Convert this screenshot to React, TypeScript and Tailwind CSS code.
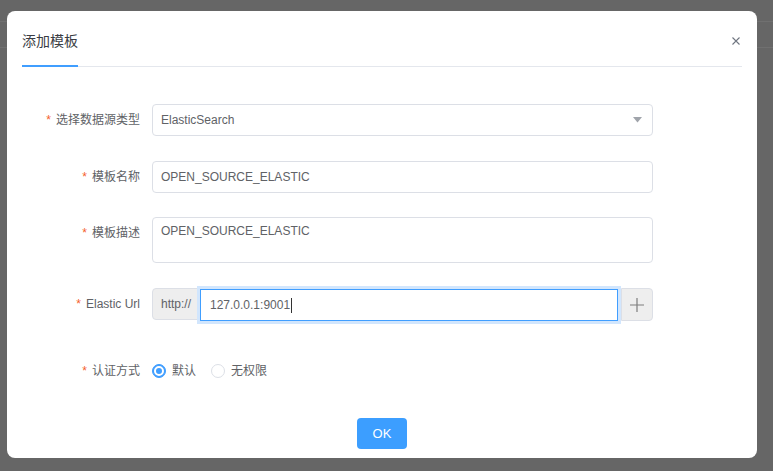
import React from "react";

const font = "font-['Liberation_Sans','Noto_Sans_CJK_SC',sans-serif]";

function Label({ text }: { text: string }) {
  return (
    <div className="w-[130px] shrink-0 pr-3 flex justify-end items-center h-8 text-[12px] text-[#606266]">
      <span className="text-[#f5612d] mr-[5px] text-[12px]">*</span>
      <span>{text}</span>
    </div>
  );
}

export default function App() {
  return (
    <div className={`w-[773px] h-[471px] bg-[#666666] relative overflow-hidden ${font}`}>
      <div className="h-[22px] border-b border-[#707070]" />
      <div className="h-[26px] border-b border-[#707070]" />

      <div className="absolute left-[7px] top-[11px] w-[750px] h-[447px] bg-white rounded-[8px] px-[15px] flex flex-col">
        {/* header */}
        <div className="relative border-b border-[#e4e7ed] pt-[20px] flex">
          <div className="border-b-2 border-[#409eff] mb-[-1px] pb-[14px] text-[14px] leading-[20px] text-[#3a3d44]">
            添加模板
          </div>
          <svg
            className="absolute right-[2px] top-[26px]"
            width="8"
            height="8"
            viewBox="0 0 8 8"
          >
            <path d="M0.5 0.5 L7.5 7.5 M7.5 0.5 L0.5 7.5" stroke="#6f7580" strokeWidth="1.1" />
          </svg>
        </div>

        {/* form */}
        <div className="flex flex-col pt-[37px]">
          <div className="flex">
            <Label text="选择数据源类型" />
            <div className="w-[501px] h-8 border border-[#dcdfe6] rounded-[4px] flex items-center justify-between pl-2 pr-[10px] text-[12px] text-[#606266]">
              <span>ElasticSearch</span>
              <svg width="9" height="6" viewBox="0 0 9 6">
                <path d="M0 0 L9 0 L4.5 5.5 Z" fill="#a0a4ab" />
              </svg>
            </div>
          </div>

          <div className="flex mt-[25px]">
            <Label text="模板名称" />
            <div className="w-[501px] h-8 border border-[#dcdfe6] rounded-[4px] flex items-center pl-2 text-[12px] text-[#606266]">
              OPEN_SOURCE_ELASTIC
            </div>
          </div>

          <div className="flex mt-[24px]">
            <Label text="模板描述" />
            <div className="w-[501px] h-[46px] border border-[#dcdfe6] rounded-[4px] pl-2 pt-[5px] text-[12px] leading-[16px] text-[#606266]">
              OPEN_SOURCE_ELASTIC
            </div>
          </div>

          <div className="flex mt-[25px]">
            <Label text="Elastic Url" />
            <div className="w-[501px] h-8 flex">
              <div className="w-[48px] h-8 bg-[#eeeeee] border border-[#dcdfe6] rounded-l-[4px] flex items-center pl-2 text-[12px] text-[#606266]">
                http://
              </div>
              <div className="w-[418px] h-8 mt-[1px] border border-[#409eff] ring-[3px] ring-[#d2e6fd] flex items-center pl-[9px] text-[12px] text-[#606266]">
                <span>127.0.0.1:9001</span>
                <span className="inline-block w-px h-[15px] bg-[#333] ml-[1px]" />
              </div>
              <div className="ml-[3px] w-[32px] h-[33px] bg-[#eeeeee] border border-[#dcdfe6] rounded-r-[4px] flex items-center justify-center">
                <svg width="14" height="14" viewBox="0 0 14 14">
                  <path d="M7 0 L7 14 M0 7 L14 7" stroke="#7d7d7d" strokeWidth="1.2" />
                </svg>
              </div>
            </div>
          </div>

          <div className="flex mt-[35px]">
            <Label text="认证方式" />
            <div className="h-8 flex items-center text-[12px] text-[#606266]">
              <span className="w-[14px] h-[14px] rounded-full border border-[#409eff] bg-[#409eff] flex items-center justify-center">
                <span className="w-[10px] h-[10px] rounded-full border-[2px] border-white bg-[#409eff]" />
              </span>
              <span className="ml-[6px]">默认</span>
              <span className="ml-[15px] w-[14px] h-[14px] rounded-full border border-[#dcdfe6] bg-white" />
              <span className="ml-[6px]">无权限</span>
            </div>
          </div>

          <div className="flex justify-center mt-[31px]">
            <div className="w-[50px] h-[31px] rounded-[4px] bg-[#3c9eff] text-white text-[13px] flex items-center justify-center">
              OK
            </div>
          </div>
        </div>
      </div>
    </div>
  );
}
